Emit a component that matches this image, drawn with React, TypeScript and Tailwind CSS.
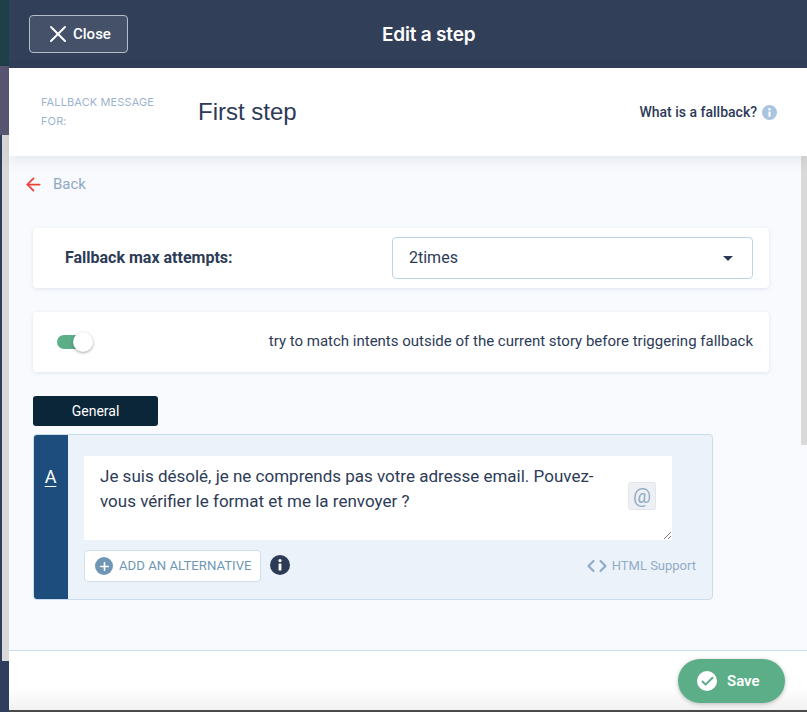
import React from "react";
import { X, ArrowLeft, ChevronLeft, ChevronRight, Plus, Check } from "lucide-react";

function InfoDot({ className, size }: { className: string; size: number }) {
  return (
    <svg width={size} height={size} viewBox="0 0 20 20" className={className}>
      <circle cx="10" cy="10" r="10" fill="currentColor" />
      <circle cx="10" cy="5.6" r="1.6" fill="#fff" />
      <rect x="8.6" y="8.6" width="2.8" height="7" rx="0.6" fill="#fff" />
    </svg>
  );
}

export default function App() {
  return (
    <div className="w-[807px] h-[712px] flex overflow-hidden bg-[#2f3e5a] font-['Roboto',sans-serif] text-[#2d3b57]">
      <div className="w-[9px] flex flex-col shrink-0">
        <div className="h-[66px] bg-[#1d4049]" />
        <div className="h-[69px] bg-[#585672]" />
        <div className="h-[526px] pl-[2px] bg-[#2f3e5a]">
          <div className="h-full bg-[#d9d9d9]" />
        </div>
        <div className="flex-1 bg-[#2f3e5a]" />
      </div>

      <div className="flex-1 flex flex-col min-w-0">
        <header className="h-[68px] shrink-0 bg-[#323f59] flex items-center pl-[20px]">
          <button className="w-[99px] h-[38px] rounded-[4px] border border-[#b4bcc8] bg-[#445168] flex items-center pl-[14px] gap-[1px] text-white text-[15px] font-medium">
            <X size={28} strokeWidth={1.7} />
            <span>Close</span>
          </button>
          <h1 className="ml-[254px] text-white text-[19px] leading-none font-semibold font-['Inter',sans-serif] tracking-[-0.2px]">Edit a step</h1>
        </header>

        <section className="h-[88px] shrink-0 bg-white shadow-[0_4px_14px_rgba(50,63,89,0.10)] flex items-center pl-[32px] pr-[30px] relative z-10">
          <div className="w-[157px] text-[11px] leading-[19px] tracking-[0.12px] text-[#9cb4cd] font-['Inter',sans-serif]">
            <div>FALLBACK MESSAGE</div>
            <div>FOR:</div>
          </div>
          <div className="text-[24px] leading-none font-['Liberation_Sans',sans-serif] text-[#2d3b57]">First step</div>
          <div className="ml-auto flex items-center gap-[5px] pt-[1px]">
            <span className="text-[14px] font-medium">What is a fallback?</span>
            <InfoDot size={15} className="text-[#a9c4e0]" />
          </div>
        </section>

        <div className="h-[494px] shrink-0 bg-[#f8fafe] flex">
          <main className="flex-1 min-w-0 pl-[24px] pr-[32px]">
            <div className="flex items-center h-[56px] pt-[1px] -ml-[10px] gap-[9px] text-[#8fa9c4]">
              <ArrowLeft size={21} strokeWidth={2} className="text-[#ef3e36]" />
              <span className="text-[15px]">Back</span>
            </div>

            <div className="h-[60px] mt-[16px] rounded-[4px] bg-white shadow-[0_1px_4px_rgba(50,63,89,0.12)] flex items-center pl-[32px] pr-[16px]">
              <span className="text-[16px] font-bold w-[327px]">Fallback max attempts:</span>
              <div className="flex-1 h-[42px] rounded-[4px] border border-[#bcd5e6] flex items-center justify-between pl-[16px] pr-[19px] text-[16px]">
                <span>2times</span>
                <span className="w-0 h-0 border-x-[5px] border-x-transparent border-t-[5px] border-t-[#2d3b57]" />
              </div>
            </div>

            <div className="h-[60px] mt-[24px] rounded-[4px] bg-white shadow-[0_1px_4px_rgba(50,63,89,0.12)] flex items-center justify-between pl-[24px] pr-[16px]">
              <div className="relative w-[37px] h-[20px] flex items-center">
                <div className="w-[32px] h-[14px] rounded-full bg-[#5bae88]" />
                <div className="absolute left-[16px] top-0 w-[20px] h-[20px] rounded-full bg-white shadow-[0_1px_3px_rgba(0,0,0,0.35)]" />
              </div>
              <span className="text-[15px] -mt-[2px]">try to match intents outside of the current story before triggering fallback</span>
            </div>

            <div className="mt-[24px] w-[125px] h-[30px] rounded-[3px] bg-[#0b2639] text-white text-[14px] flex items-center justify-center">General</div>

            <div className="mt-[8px] w-[680px] h-[166px] rounded-[4px] border border-[#c9ddec] bg-[#ebf2fa] flex overflow-hidden">
              <div className="w-[35px] -ml-px -my-px bg-[#1c4d7c] shrink-0 flex justify-center pt-[33px]">
                <span className="text-white text-[18px] leading-[20px] underline underline-offset-[3px] h-[20px]">A</span>
              </div>
              <div className="flex-1 pl-[16px] pr-[16px] pt-[21px]">
                <div className="relative w-[588px] h-[84px] bg-white pl-[16px] pt-[8px] pr-[70px] text-[17px] leading-[25px]">
                  Je suis désolé, je ne comprends pas votre adresse email. Pouvez-vous vérifier le format et me la renvoyer ?
                  <div className="absolute right-[16px] top-[26px] w-[28px] h-[28px] rounded-[3px] border border-[#dfe6ee] bg-[#eef0f3] flex items-center justify-center text-[#92abc6] text-[20px] leading-none">@</div>
                  <svg className="absolute right-0 bottom-0" width="10" height="10" viewBox="0 0 10 10">
                    <path d="M9 2 L2 9 M9 6 L6 9" stroke="#777" strokeWidth="1" />
                  </svg>
                </div>
                <div className="mt-[10px] flex items-center">
                  <div className="w-[177px] h-[32px] rounded-[4px] border border-[#cfe0ec] bg-white flex items-center pl-[10px] gap-[6px] text-[#6f97b5] text-[13.2px]">
                    <span className="w-[18px] h-[18px] rounded-full bg-[#6f97b5] flex items-center justify-center text-white">
                      <Plus size={13} strokeWidth={3} />
                    </span>
                    <span>ADD AN ALTERNATIVE</span>
                  </div>
                  <InfoDot size={20} className="ml-[9px] -mt-[2px] text-[#2d3b57]" />
                  <div className="ml-auto flex items-center text-[#93acc6] text-[13px]">
                    <ChevronLeft size={20} strokeWidth={2.6} />
                    <ChevronRight size={20} strokeWidth={2.6} className="-ml-[8px]" />
                    <span className="-ml-[1px]">HTML Support</span>
                  </div>
                </div>
              </div>
            </div>
          </main>
          <div className="w-[6px] shrink-0">
            <div className="h-[289px] bg-[#d9d9d9]" />
          </div>
        </div>

        <footer className="flex-1 border-t border-[#c9dcea] bg-gradient-to-b from-white from-60% to-[#f1f1f1] flex items-start justify-end pr-[22px] pt-[8px] border-b-2 border-b-[#4a4a4a]">
          <button className="w-[107px] h-[44px] rounded-full bg-[#5bae88] text-white shadow-[0_1px_4px_rgba(0,0,0,0.25)] flex items-center pl-[19px] gap-[10px] text-[15px] font-semibold">
            <span className="w-[20px] h-[20px] rounded-full bg-white flex items-center justify-center text-[#5bae88]">
              <Check size={15} strokeWidth={3.2} />
            </span>
            <span>Save</span>
          </button>
        </footer>
      </div>
    </div>
  );
}
